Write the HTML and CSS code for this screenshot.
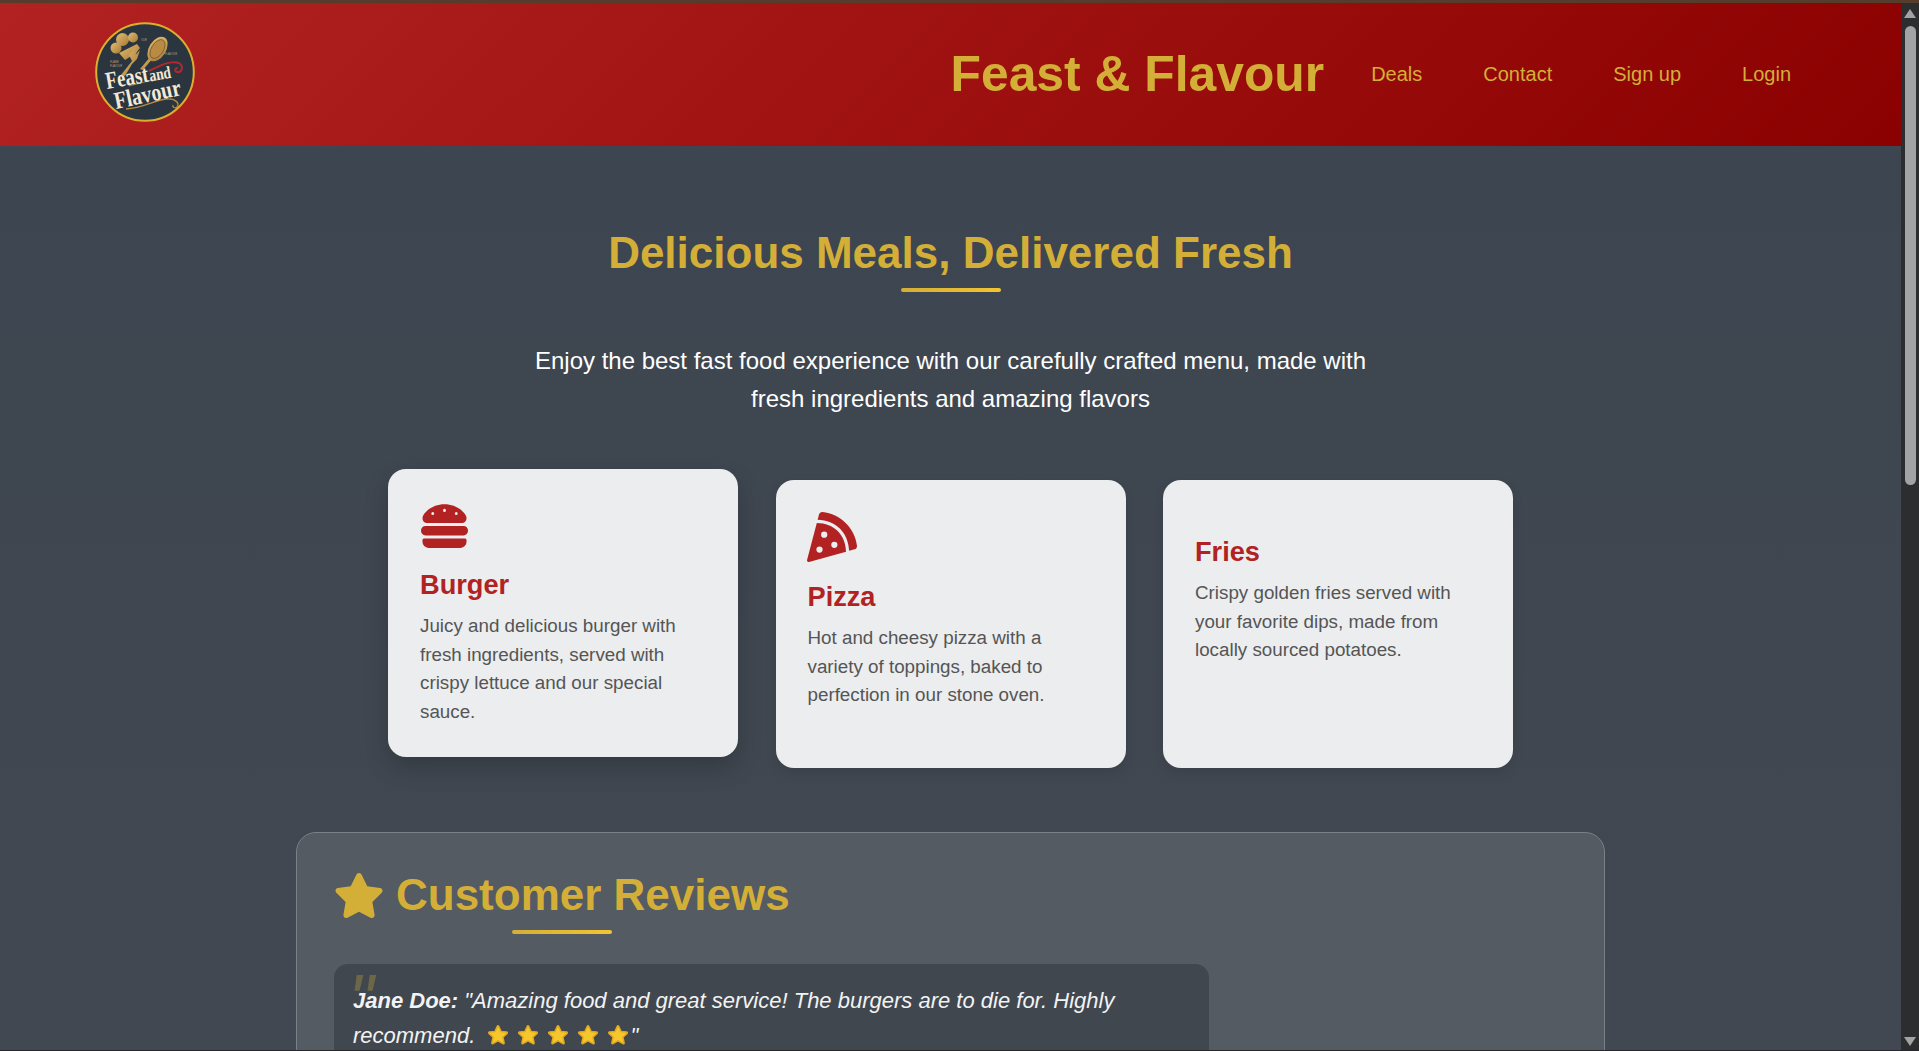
FILE: index.html
```html
<!DOCTYPE html>
<html lang="en">
<head>
    <meta charset="UTF-8">
    <meta name="viewport" content="width=device-width, initial-scale=1.0">
    <title>Feast &amp; Flavour</title>
    <link rel="stylesheet" href="styles.css">
</head>
<body>
    <div class="window-top"></div>
    <div class="window">
        <div class="page">
            <header class="site-header">
                <a class="logo" href="#" aria-label="Feast and Flavour">
                    <svg viewBox="0 0 100 100" width="100" height="100">
                        <defs>
                            <linearGradient id="logoGold" x1="0" y1="0" x2="1" y2="1">
                                <stop offset="0" stop-color="#e2bd72"/>
                                <stop offset="1" stop-color="#a87a35"/>
                            </linearGradient>
                        </defs>
                        <circle cx="50" cy="50" r="48.8" fill="#2a3540" stroke="#dcae2e" stroke-width="2"/>
                        <g fill="url(#logoGold)">
                            <!-- chef hat -->
                            <circle cx="21" cy="26" r="5.5"/>
                            <circle cx="27.500" cy="17.500" r="6.500"/>
                            <circle cx="38" cy="15.500" r="5"/>
                            <path d="M24 31 L42 22 L45 26 L41 31 L30 38 Z"/>
                            <!-- fork -->
                            <path d="M26 53 L37 39 L34 33 L41 25 L38.500 32 L43 26.500 L40.500 33 L45 28 L42 37 L37 42 L30 54 Z"/>
                            <!-- spoon -->
                            <path d="M45 47 L56 34 L58 36 L48 48 Z"/>
                            <ellipse cx="62.500" cy="27" rx="8.500" ry="13.500" transform="rotate(32 62.500 27)"/>
                        </g>
                        <ellipse cx="62.500" cy="27" rx="6" ry="10.500" transform="rotate(32 62.500 27)" fill="#b98a42" stroke="#5c4a2c" stroke-width="0.6"/>
                        <path d="M54 49 C66 43 76 38 84 41 C89 44 87 51 82 50 C79 49 80 46 83 46" fill="none" stroke="#b3282c" stroke-width="2"/>
                        <path d="M31 87 C48 86 60 78 71 77 C80 76 85 81 82 85 C80 87 77 85 78 83" fill="none" stroke="#b98a42" stroke-width="1.300"/>
                        <path d="M34 64 L70 55" stroke="#b98a42" stroke-width="0.800"/>
                        <text class="logo-tiny" x="15" y="41">FLAME</text>
                        <text class="logo-tiny" x="15" y="45">FLAVOUR</text>
                        <text class="logo-tiny" x="46" y="19">OUR</text>
                        <text class="logo-tiny" x="70" y="33">FLAVOUR</text>
                        <text class="logo-text" transform="translate(12 67) rotate(-10) scale(0.9 1.15)">Feast<tspan class="logo-text-small" dx="1">and</tspan></text>
                        <text class="logo-text" transform="translate(21 87) rotate(-12) scale(0.95 1.15)">Flavour</text>
                    </svg>
                </a>
                <div class="header-right">
                    <h1 class="brand">Feast &amp; Flavour</h1>
                    <nav class="main-nav">
                        <a href="#">Deals</a>
                        <a href="#">Contact</a>
                        <a href="#">Sign up</a>
                        <a href="#">Login</a>
                    </nav>
                </div>
            </header>

            <main class="content">
                <section class="hero">
                    <h2 class="section-title">Delicious Meals, Delivered Fresh</h2>
                    <p class="hero-text">Enjoy the best fast food experience with our carefully crafted menu, made with fresh ingredients and amazing flavors</p>
                </section>

                <section class="cards">
                    <article class="card card-raised">
                        <svg class="card-icon card-icon-burger" viewBox="0 0 512 512" preserveAspectRatio="none"><path d="M464 256H48a48 48 0 0 0 0 96h416a48 48 0 0 0 0-96zm16 128H32a16 16 0 0 0-16 16v16a64 64 0 0 0 64 64h352a64 64 0 0 0 64-64v-16a16 16 0 0 0-16-16zM58.64 224h394.72c34.57 0 54.14-43.9 34.82-75.88C448 83.2 359.55 32.1 256 32c-103.54.1-192 51.2-232.18 116.11C4.5 180.09 24.07 224 58.64 224zM384 112a16 16 0 1 1-16 16 16 16 0 0 1 16-16zM256 80a16 16 0 1 1-16 16 16 16 0 0 1 16-16zm-128 32a16 16 0 1 1-16 16 16 16 0 0 1 16-16z"/></svg>
                        <h3>Burger</h3>
                        <p>Juicy and delicious burger with fresh ingredients, served with crispy lettuce and our special sauce.</p>
                    </article>
                    <article class="card">
                        <svg class="card-icon card-icon-pizza" viewBox="0 0 512 512"><path d="M158.87.15c-16.16-1.52-31.2 8.42-35.33 24.12l-14.81 56.27c187.62 5.49 314.54 130.61 322.48 317l56.94-15.78c15.72-4.36 25.49-19.68 23.62-35.9C490.89 165.08 340.78 17.32 158.87.15zm-58.47 112L.55 491.64a16.21 16.21 0 0 0 20 19.75l379-105.1c-4.27-174.89-123.08-292.14-299.15-294.1zM128 416a32 32 0 1 1 32-32 32 32 0 0 1-32 32zm48-152a32 32 0 1 1 32-32 32 32 0 0 1-32 32zm104 104a32 32 0 1 1 32-32 32 32 0 0 1-32 32z"/></svg>
                        <h3>Pizza</h3>
                        <p>Hot and cheesy pizza with a variety of toppings, baked to perfection in our stone oven.</p>
                    </article>
                    <article class="card">
                        <div class="card-icon-empty"></div>
                        <h3>Fries</h3>
                        <p>Crispy golden fries served with your favorite dips, made from locally sourced potatoes.</p>
                    </article>
                </section>

                <section class="reviews">
                    <h2 class="section-title reviews-title">
                        <svg class="reviews-star" viewBox="20 0 536 512"><path d="M259.3 17.8L194 150.2 47.9 171.5c-26.2 3.8-36.7 36.1-17.7 54.6l105.7 103-25 145.5c-4.5 26.3 23.2 46 46.4 33.7L288 439.6l130.7 68.7c23.2 12.2 50.9-7.4 46.4-33.7l-25-145.5 105.7-103c19-18.5 8.5-50.8-17.7-54.6L382 150.2 316.7 17.8c-11.7-23.6-45.6-24.1-57.4 0z"/></svg>
                        Customer Reviews
                    </h2>
                    <blockquote class="review">
                        <p><strong>Jane Doe:</strong> "Amazing food and great service! The burgers are to die for. Highly recommend. <span class="stars">
                            <svg viewBox="0 0 24 24"><path class="star-shape" d="M12 3.500l2.600 5.700 6 .6-4.500 4.100 1.300 6.100-5.400-3.100-5.400 3.100 1.300-6.100-4.500-4.100 6-.6z"/></svg>
                            <svg viewBox="0 0 24 24"><path class="star-shape" d="M12 3.500l2.600 5.700 6 .6-4.500 4.100 1.300 6.100-5.400-3.100-5.400 3.100 1.300-6.100-4.500-4.100 6-.6z"/></svg>
                            <svg viewBox="0 0 24 24"><path class="star-shape" d="M12 3.500l2.600 5.700 6 .6-4.500 4.100 1.300 6.100-5.400-3.100-5.400 3.100 1.300-6.100-4.500-4.100 6-.6z"/></svg>
                            <svg viewBox="0 0 24 24"><path class="star-shape" d="M12 3.500l2.600 5.700 6 .6-4.500 4.100 1.300 6.100-5.400-3.100-5.400 3.100 1.300-6.100-4.500-4.100 6-.6z"/></svg>
                            <svg viewBox="0 0 24 24"><path class="star-shape" d="M12 3.500l2.600 5.700 6 .6-4.500 4.100 1.300 6.100-5.400-3.100-5.400 3.100 1.300-6.100-4.500-4.100 6-.6z"/></svg>
                        </span>"</p>
                    </blockquote>
                </section>
            </main>
        </div>

        <div class="scrollbar">
            <span class="scroll-arrow scroll-up"></span>
            <span class="scroll-thumb"></span>
            <span class="scroll-arrow scroll-down"></span>
        </div>
    </div>
    <div class="window-bottom"></div>
</body>
</html>
```

FILE: styles.css
```css
/* Feast & Flavour */
* {
    box-sizing: border-box;
}
html, body {
    height: 100%;
    margin: 0;
    overflow: hidden;
}
body {
    display: flex;
    flex-direction: column;
    font-family: "Liberation Sans", Arial, sans-serif;
    background-color: #2b2b2b;
}
.window-top {
    height: 3px;
    background-color: #553c2b;
}
.window-bottom {
    height: 1px;
    background-color: #26282b;
}
.window {
    flex: 1;
    min-height: 0;
    display: flex;
}
.page {
    flex: 1;
    min-width: 0;
    overflow: hidden;
    background: linear-gradient(180deg, #3c4550 0%, #424851 100%);
}

/* header */
.site-header {
    height: 143px;
    display: flex;
    align-items: center;
    justify-content: space-between;
    padding: 0 110px 0 95px;
    background: linear-gradient(135deg, #b22222, #8b0000);
}
.logo {
    display: block;
    width: 100px;
    height: 100px;
    margin-bottom: 5px;
}
.logo-text {
    font-family: "Liberation Serif", serif;
    font-weight: 700;
    font-size: 21px;
    fill: #f2ead8;
}
.logo-text-small {
    font-size: 15px;
}
.logo-tiny {
    font-family: "Liberation Sans", Arial, sans-serif;
    font-size: 2.6px;
    fill: #b9a27a;
}
.header-right {
    display: flex;
    align-items: center;
}
.brand {
    margin: 0 47px 2px 0;
    font-size: 49.8px;
    font-weight: 700;
    color: #d4af37;
}
.main-nav {
    display: flex;
    gap: 61px;
}
.main-nav a {
    font-size: 20px;
    color: #d4af37;
    text-decoration: none;
}

/* hero */
.content {
    padding-top: 82px;
}
.hero {
    text-align: center;
}
.section-title {
    position: relative;
    margin: 0;
    font-size: 44px;
    font-weight: 700;
    color: #d4af37;
}
.section-title::after {
    content: "";
    position: absolute;
    left: 50%;
    bottom: -14px;
    width: 100px;
    height: 4px;
    margin-left: -50px;
    border-radius: 2px;
    background: linear-gradient(90deg, #d4af37, #f4c430);
}
.hero-text {
    max-width: 850px;
    margin: 64px auto 0;
    font-size: 24px;
    line-height: 38px;
    color: #fff;
}

/* cards */
.cards {
    display: grid;
    grid-template-columns: repeat(3, 350px);
    justify-content: center;
    gap: 37.5px;
    margin-top: 62px;
}
.card {
    height: 288px;
    padding: 32px;
    border-radius: 18px;
    background-color: #ebedef;
    box-shadow: 0 4px 12px rgba(0, 0, 0, 0.1);
}
.card-raised {
    transform: translateY(-11px);
    box-shadow: 0 10px 24px rgba(0, 0, 0, 0.2);
}
.card-icon {
    display: block;
    width: 50px;
    height: 50px;
    margin-bottom: 19px;
    fill: #b22222;
}
.card-icon-burger {
    width: 47px;
    margin-left: 1px;
    margin-bottom: 18px;
}
.card-icon-pizza {
    margin-left: -1px;
}
.card-icon-empty {
    height: 24px;
}
.card h3 {
    margin: 0 0 11px;
    font-size: 27.2px;
    font-weight: 700;
    color: #b22222;
}
.card p {
    margin: 0;
    font-size: 18.8px;
    line-height: 28.5px;
    color: #555;
}

/* reviews */
.reviews {
    width: 1309px;
    height: 400px;
    margin: 64px auto 0;
    padding: 37px 37px;
    border: 1px solid #7a8088;
    border-radius: 20px;
    background-color: #545b63;
}
.reviews-title {
    display: inline-flex;
    align-items: center;
    gap: 13px;
    margin-left: 1px;
}
.reviews-star {
    width: 48px;
    height: 45px;
    fill: #d4af37;
}
.review {
    position: relative;
    width: 875px;
    margin: 42px 0 0;
    padding: 19px 19px 40px;
    border-radius: 14px;
    background-color: #41474f;
}
.review::before {
    content: "\0022";
    position: absolute;
    left: 14px;
    top: 0;
    font-size: 72px;
    font-style: italic;
    line-height: 1;
    color: #d4af37;
    opacity: 0.3;
}
.review p {
    margin: 0;
    font-size: 22px;
    line-height: 35px;
    font-style: italic;
    color: #f2f3f4;
}
.stars {
    display: inline-flex;
    gap: 6px;
    margin-left: 5px;
    vertical-align: -4px;
}
.stars svg {
    width: 24px;
    height: 24px;
}
.star-shape {
    fill: #f5c72c;
    stroke: #e3a71f;
    stroke-width: 3;
    stroke-linejoin: round;
    paint-order: stroke;
}

/* scrollbar */
.scrollbar {
    width: 18px;
    flex-shrink: 0;
    display: flex;
    flex-direction: column;
    align-items: center;
    background-color: #2c2d2e;
}
.scroll-arrow {
    width: 0;
    height: 0;
    border-left: 6.5px solid transparent;
    border-right: 6.5px solid transparent;
}
.scroll-up {
    margin-top: 6px;
    border-bottom: 9px solid #a3a3a3;
}
.scroll-thumb {
    width: 11px;
    height: 459px;
    margin-top: 8px;
    border-radius: 6px;
    background-color: #a3a3a3;
}
.scroll-down {
    margin-top: auto;
    margin-bottom: 4px;
    border-top: 9px solid #a3a3a3;
}
```
